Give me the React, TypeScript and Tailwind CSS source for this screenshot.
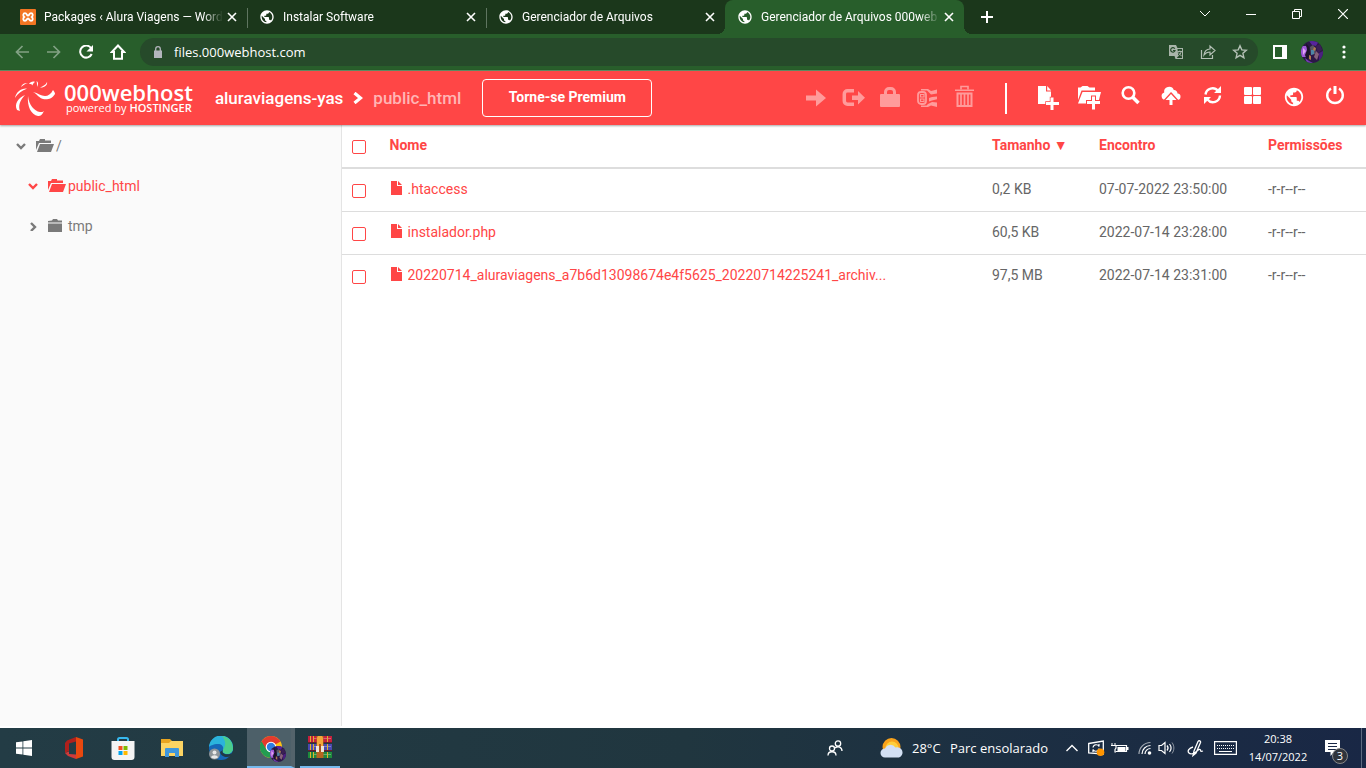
import type { ReactNode } from 'react';
import clsx from 'clsx';
import { MdPublic } from 'react-icons/md';

type GlyphProps = { w: number; h: number; className?: string; children: ReactNode };

function Glyph({ w, h, className, children }: GlyphProps) {
  return (
    <svg
      width={w}
      height={h}
      viewBox={`0 0 ${w} ${h}`}
      fill="currentColor"
      className={clsx('shrink-0', className)}
      aria-hidden="true"
    >
      {children}
    </svg>
  );
}

/* ---------- Browser ---------- */

const tabs = [
  { title: 'Packages ‹ Alura Viagens — Word', icon: 'xampp', active: false },
  { title: 'Instalar Software', icon: 'globe', active: false },
  { title: 'Gerenciador de Arquivos', icon: 'globe', active: false },
  { title: 'Gerenciador de Arquivos 000web', icon: 'globe', active: true },
];

function XamppIcon() {
  return (
    <Glyph w={16} h={16}>
      <rect width="16" height="16" rx="1" fill="#f37623" />
      <path
        d="M5 4.200c2 0 1.500 2.300 3 2.300s1-2.300 3-2.300 2.300 2.600.8 3.800c1.500 1.200 1.200 3.800-.8 3.800s-1.500-2.300-3-2.300-1 2.300-3 2.300-2.300-2.600-.8-3.800C2.700 6.800 3 4.200 5 4.200z"
        fill="none"
        stroke="#fff"
        strokeWidth="1.800"
      />
    </Glyph>
  );
}

function CloseIcon() {
  return (
    <Glyph w={10} h={10}>
      <path d="M1 1l8 8M9 1L1 9" stroke="currentColor" strokeWidth="1.600" fill="none" />
    </Glyph>
  );
}

function TabStrip() {
  return (
    <div className="flex h-[34px] bg-[#1b371b] pl-2 text-white">
      {tabs.map((tab, i) => (
        <div
          key={i}
          className={clsx(
            'relative flex w-[239px] min-w-0 items-center pl-3 pr-2.5',
            tab.active && 'rounded-t-lg bg-[#285e2b]'
          )}
        >
          {i > 0 && !tab.active && <span className="absolute left-0 top-2 h-5 w-px bg-[#5f7560]" />}
          {tab.active && (
            <>
              <span className="absolute -left-2 bottom-0 size-2 bg-[radial-gradient(circle_at_0_0,#1b371b_8px,#285e2b_8px)]" />
              <span className="absolute -right-2 bottom-0 size-2 bg-[radial-gradient(circle_at_100%_0,#1b371b_8px,#285e2b_8px)]" />
            </>
          )}
          {tab.icon === 'xampp' ? <XamppIcon /> : <MdPublic size={16} className="shrink-0" aria-hidden="true" />}
          <span className="ml-2 min-w-0 flex-1 overflow-hidden whitespace-nowrap font-[Roboto,sans-serif] text-[12px] leading-4 [mask-image:linear-gradient(to_right,#000_calc(100%-20px),transparent)]">
            {tab.title}
          </span>
          <button className="ml-1" aria-label="Fechar guia">
            <CloseIcon />
          </button>
        </div>
      ))}
      <button className="ml-4 self-center" aria-label="Nova guia">
        <Glyph w={14} h={12}>
          <path d="M6 0h2v5h5v2H8v5H6V7H1V5h5z" />
        </Glyph>
      </button>
      <div className="ml-auto flex h-7 items-center">
        <button className="flex w-[46px] justify-center" aria-label="Pesquisar guias">
          <Glyph w={12} h={8}>
            <path d="M1 1l5 5 5-5" fill="none" stroke="currentColor" />
          </Glyph>
        </button>
        <button className="flex w-[46px] justify-center" aria-label="Minimizar">
          <Glyph w={10} h={1}>
            <rect width="10" height="1" />
          </Glyph>
        </button>
        <button className="flex w-[46px] justify-center" aria-label="Restaurar">
          <Glyph w={10} h={10}>
            <path d="M.5 2.500h7v7h-7zM2.500 2.500v-2h7v7h-2" fill="none" stroke="currentColor" />
          </Glyph>
        </button>
        <button className="flex w-[46px] justify-center" aria-label="Fechar">
          <Glyph w={10} h={10}>
            <path d="M0 0l10 10M10 0L0 10" fill="none" stroke="currentColor" strokeWidth="1.200" />
          </Glyph>
        </button>
      </div>
    </div>
  );
}

function Avatar({ size }: { size: number }) {
  return (
    <svg width={size} height={size} viewBox="0 0 22 22" className="shrink-0 rounded-full" aria-hidden="true">
      <rect width="22" height="22" fill="#2c1748" />
      <path d="M0 5h5l3 5-3 6H0z" fill="#a05ad8" />
      <path d="M2 7l3 3-3 4z" fill="#e3a6f5" />
      <path d="M8 0h10l-3 5-4-1z" fill="#57249c" />
      <path d="M15 5l4-2 2 6-4 3z" fill="#3b1f55" />
      <path d="M5 2l3 4 1 7-3 6-2-5 2-5z" fill="#1c1428" />
      <path d="M9 6l3-2 3 4-1 5-4 1z" fill="#5b5560" />
      <path d="M10 9h3v4l-3 1z" fill="#4c86a8" />
      <path d="M13 6l2 1-1 3-2-1zM8 14l2 1v4l-2-1z" fill="#b07a4c" />
      <path d="M15 10l3 3-2 6-3-3z" fill="#86627a" />
      <path d="M18 12l4-2v7l-4 3z" fill="#4b1f80" />
      <path d="M4 17l4 3 4 2H6z" fill="#713bb0" />
    </svg>
  );
}

function AddressBar() {
  return (
    <div className="flex h-9 items-center bg-[#285e2b] text-white">
      <div className="flex w-[140px] items-center pl-1.5">
        <button className="flex w-8 justify-center text-[#82a184]" aria-label="Voltar">
          <Glyph w={14} h={14}>
            <path d="M14 7H1.500M7.500 1L1.500 7l6 6" fill="none" stroke="currentColor" strokeWidth="1.700" />
          </Glyph>
        </button>
        <button className="flex w-8 justify-center text-[#82a184]" aria-label="Avançar">
          <Glyph w={14} h={14}>
            <path d="M0 7h12.500M6.500 1l6 6-6 6" fill="none" stroke="currentColor" strokeWidth="1.700" />
          </Glyph>
        </button>
        <button className="flex w-8 justify-center" aria-label="Atualizar">
          <Glyph w={14} h={14}>
            <path d="M12 3A6 6 0 1 0 12.700 9" fill="none" stroke="currentColor" strokeWidth="2" />
            <path d="M14 0v6.500H7.500z" />
          </Glyph>
        </button>
        <button className="flex w-8 justify-center" aria-label="Página inicial">
          <Glyph w={16} h={16}>
            <path d="M8 1.500L1.800 8H4v6.800h8V8h2.200z" fill="none" stroke="currentColor" strokeWidth="2" />
          </Glyph>
        </button>
      </div>
      <div className="flex h-7 min-w-0 flex-1 items-center rounded-full bg-[#264a2a] pl-3.5 pr-2.5 text-[#b4c0b5]">
        <Glyph w={8} h={12} className="text-[#b3b5bd]">
          <path d="M0 4.500h8V12H0z" />
          <path d="M1.700 5V3a2.300 2.300 0 0 1 4.600 0v2" fill="none" stroke="currentColor" strokeWidth="1.300" />
        </Glyph>
        <input
          type="text"
          aria-label="Endereço"
          defaultValue="files.000webhost.com"
          className="ml-3 min-w-0 flex-1 bg-transparent text-[13px] leading-5 text-white outline-none"
        />
        <div className="flex gap-4">
          <button className="flex w-4 justify-center" aria-label="Traduzir">
            <Glyph w={16} h={16}>
              <path d="M1 1h7l1.500 3h5.500v11H7.500L6.500 12H1z" fill="#a9b5aa" />
              <path d="M9.500 5h4.500v9H8.800l1.500-2z" fill="#264a2a" />
              <path d="M9.500 7.500h4.500M11.800 6.500v1M13.200 7.700c-.5 2-1.500 3-3 4.200M10.600 8.500c.5 1.500 1.500 2.500 3 3.300" fill="none" stroke="#a9b5aa" />
              <path d="M6.800 4.800A2.200 2.200 0 1 0 7 6.500H5" fill="none" stroke="#264a2a" strokeWidth="1.200" />
            </Glyph>
          </button>
          <button className="flex w-4 justify-center" aria-label="Compartilhar">
            <Glyph w={16} h={16}>
              <path d="M1.500 6v8.500h11V11" fill="none" stroke="currentColor" strokeWidth="1.200" />
              <path
                d="M4 11c.5-4 2.500-5.800 6-6V2l5 4.500-5 4.500V8C7.500 8 5.500 9 4 11z"
                fill="none"
                stroke="currentColor"
                strokeWidth="1.200"
              />
            </Glyph>
          </button>
          <button className="flex w-4 justify-center" aria-label="Favoritos">
            <Glyph w={16} h={16}>
              <path
                d="M8 1.800l1.800 4.100 4.500.4-3.400 3 1 4.400L8 11.400l-3.900 2.300 1-4.400-3.400-3 4.500-.4z"
                fill="none"
                stroke="currentColor"
                strokeWidth="1.400"
              />
            </Glyph>
          </button>
        </div>
      </div>
      <div className="flex w-[108px] items-center pl-1.5">
        <button className="flex w-8 justify-center" aria-label="Painel lateral">
          <Glyph w={14} h={14}>
            <path d="M1 1h12v12H1z" fill="none" stroke="currentColor" strokeWidth="2" />
            <path d="M9 1h4v12H9z" />
          </Glyph>
        </button>
        <button className="flex w-8 justify-center" aria-label="Perfil">
          <Avatar size={22} />
        </button>
        <button className="flex w-8 justify-center" aria-label="Menu">
          <Glyph w={4} h={14}>
            <circle cx="2" cy="2" r="1.600" />
            <circle cx="2" cy="7" r="1.600" />
            <circle cx="2" cy="12" r="1.600" />
          </Glyph>
        </button>
      </div>
    </div>
  );
}

/* ---------- File manager header ---------- */

const selectionActions = [
  {
    label: 'Mover',
    icon: (
      <Glyph w={22} h={24}>
        <path d="M0 10.500h10V4.500l10 8.500-10 8.500v-6H0z" />
      </Glyph>
    ),
  },
  {
    label: 'Copiar para',
    icon: (
      <Glyph w={24} h={24}>
        <path d="M12 5.800H5.500A3.200 3.200 0 0 0 2.300 9v7a3.200 3.200 0 0 0 3.200 3.200H12" fill="none" stroke="currentColor" strokeWidth="3.500" />
        <path d="M10 10.500h6V6l7 6.800-7 6.700V15h-6z" />
      </Glyph>
    ),
  },
  {
    label: 'Permissões',
    icon: (
      <Glyph w={22} h={24}>
        <rect y="9" width="20" height="13" rx="1" />
        <path d="M5.500 10V7A3.500 3.500 0 0 1 9 3.500h2A3.500 3.500 0 0 1 14.500 7v3" fill="none" stroke="currentColor" strokeWidth="3" />
      </Glyph>
    ),
  },
  {
    label: 'Compactar',
    icon: (
      <Glyph w={22} h={24}>
        <rect x="1" y="7" width="8" height="12" rx="3" fill="none" stroke="currentColor" strokeWidth="1.800" />
        <path d="M3.500 9.500h3.500v2.500H3.500zM3.500 14h3.500v2.500H3.500z" fill="none" stroke="currentColor" strokeWidth="1.200" />
        <path d="M4 4h7l3 2 6-1.500v4l-6 1L11 6.500 10 5.500H4zM12 13l3-1 5-.5v2.800l-5 1.200-3 1zM4 22h7l3-1.500 6 1.500v-4.500l-5-.5-4 2-1.500 1.500H4z" />
      </Glyph>
    ),
  },
  {
    label: 'Excluir',
    icon: (
      <Glyph w={20} h={24}>
        <path d="M0 4.500h19V6H0z" />
        <path d="M6 4.500v-3h7v3" fill="none" stroke="currentColor" strokeWidth="1.600" />
        <path d="M2.500 8.500h14V21h-14z" fill="none" stroke="currentColor" strokeWidth="2" />
        <path d="M6 9v11M9.500 9v11M13 9v11" stroke="currentColor" strokeWidth="1.700" />
      </Glyph>
    ),
  },
];

/* the plus and arrow overlays keep a thin gap in the header's red */
const globalActions = [
  {
    label: 'Novo arquivo',
    icon: (
      <Glyph w={22} h={28}>
        <path d="M1 4h8v5.500h5V22H1z" />
        <path d="M10.200 4l4 4.500h-4z" />
        <path
          d="M13.500 15.500h3V20H22v3h-5.500v5h-3v-5H9v-3h4.500z"
          stroke="#ff4646"
          strokeWidth="1.400"
          paintOrder="stroke"
        />
      </Glyph>
    ),
  },
  {
    label: 'Nova pasta',
    icon: (
      <Glyph w={24} h={28}>
        <path d="M1 5.500h2.500l2-1.500h5l2 1.500H18V8.500H4.500L1 18z" />
        <path d="M5.500 10H24l-3 11.500H1z" />
        <path
          d="M15 14.500h3V19h5v3h-5v5.500h-3V22h-5v-3h5z"
          stroke="#ff4646"
          strokeWidth="2"
          paintOrder="stroke"
        />
      </Glyph>
    ),
  },
  {
    label: 'Buscar',
    icon: (
      <Glyph w={20} h={28}>
        <circle cx="8.500" cy="11" r="5.800" fill="none" stroke="currentColor" strokeWidth="2.600" />
        <path d="M12.500 15l6 6" stroke="currentColor" strokeWidth="3.500" />
      </Glyph>
    ),
  },
  {
    label: 'Enviar arquivos',
    icon: (
      <Glyph w={22} h={28}>
        <path d="M5.500 18a3.800 3.800 0 0 1-1.300-7.400A5 5 0 0 1 13.800 8 3.500 3.500 0 0 1 17.500 11.500 3.200 3.200 0 0 1 17 18z" />
        <path
          d="M11 12l5.500 6h-4v5h-3v-5h-4z"
          stroke="#ff4646"
          strokeWidth="2.800"
          paintOrder="stroke"
        />
      </Glyph>
    ),
  },
  {
    label: 'Atualizar',
    icon: (
      <Glyph w={20} h={28}>
        <path d="M3.500 12.500A7 7 0 0 1 16 9M18 13.500A7 7 0 0 1 5.500 17.500" fill="none" stroke="currentColor" strokeWidth="2.400" />
        <path d="M19 4v7h-7zM2 22v-7h7z" />
      </Glyph>
    ),
  },
  {
    label: 'Exibir em grade',
    icon: (
      <Glyph w={20} h={28}>
        <rect x="1" y="5" width="8" height="8" rx="1" />
        <rect x="10" y="5" width="8" height="8" rx="1" />
        <rect x="1" y="14" width="8" height="8" rx="1" />
        <rect x="10" y="14" width="8" height="8" rx="1" />
      </Glyph>
    ),
  },
  {
    label: 'Idioma',
    icon: <MdPublic size={22} className="mt-0.5 shrink-0" aria-hidden="true" />,
  },
  {
    label: 'Sair',
    icon: (
      <Glyph w={20} h={28}>
        <path d="M6 6.500a7.800 7.800 0 1 0 8 0" fill="none" stroke="currentColor" strokeWidth="2.400" />
        <path d="M8.500 4h3v8h-3z" />
      </Glyph>
    ),
  },
];

function Logo() {
  return (
    <a href="#" className="flex items-center gap-2 text-white">
      <Glyph w={42} h={38}>
        <path d="M19 13c5 1 8 4 12 4 3 0 6-2 8-6 1 1 2 3 2 4-3 5-8 6-12 5-4-1-6-5-10-7z" />
        <path d="M14 17c1 9 6 15 12 16 2 0 3 0 4-1-2 4-3 5-6 5-7-1-11-10-10-20z" />
        <path d="M11 16c-7 3-11 9-8 15l3 1c-2-5 0-11 5-16z" />
        <path d="M13 9.500C7 9 2 13 1 19c3-5 7-7 12-9.500z" />
        <path d="M7 8c1-3 4-4.500 7-4-3 .5-4 2-7 4zM15 5c1-2 4-3 6-2-1 .5-2.500 2-2.500 3.500C18 5 17 5 15 5zM22.500 2c2 1 2 3 .5 6 0-3 0-4-.5-6zM33 3c1 3-3 6-7 5.500C29 7 32 6 33 3z" />
      </Glyph>
      <span className="flex flex-col font-['Open_Sans',sans-serif]">
        <span className="text-[22px] font-semibold leading-5">000webhost</span>
        <span className="ml-0.5 text-[11px] leading-3">
          powered by <span className="font-semibold">HOSTINGER</span>
        </span>
      </span>
    </a>
  );
}

function AppHeader() {
  return (
    <header className="relative z-10 flex h-[55px] items-center border-t border-[#5f8a61] bg-[#ff4646] pl-3.5 pr-[11px] text-white shadow-[0_1px_2px_rgba(0,0,0,0.35)]">
      <Logo />
      <nav className="ml-[22px] flex items-center text-[17px] font-medium leading-6" aria-label="Caminho">
        <a href="#">aluraviagens-yas</a>
        <Glyph w={10} h={12} className="mx-2.5">
          <path d="M1.500 1l6 5-6 5" fill="none" stroke="currentColor" strokeWidth="3.200" />
        </Glyph>
        <a href="#" className="text-[#ffb5b5]">public_html</a>
      </nav>
      <button className="ml-[21px] h-[38px] w-[170px] rounded border border-white pb-0.5 text-sm font-bold">
        Torne-se Premium
      </button>
      <div className="ml-auto flex items-center">
        <div className="flex pb-0.5 text-[#ff9b9b]">
          {selectionActions.map((action) => (
            <button key={action.label} className="flex w-[37px] justify-center" aria-label={action.label} disabled>
              {action.icon}
            </button>
          ))}
        </div>
        <span className="ml-[22px] mr-5 h-[31px] w-0.5 bg-white" />
        <div className="flex items-center pb-1">
          {globalActions.map((action) => (
            <button key={action.label} className="flex w-[41px] justify-center" aria-label={action.label}>
              {action.icon}
            </button>
          ))}
        </div>
      </div>
    </header>
  );
}

/* ---------- Folder tree and file list ---------- */

function Chevron({ open }: { open: boolean }) {
  return open ? (
    <Glyph w={10} h={8}>
      <path d="M1 2l4 4 4-4" fill="none" stroke="currentColor" strokeWidth="2.400" />
    </Glyph>
  ) : (
    <Glyph w={10} h={10}>
      <path d="M3 2l4 4-4 4" fill="none" stroke="currentColor" strokeWidth="2.400" />
    </Glyph>
  );
}

function OpenFolder() {
  return (
    <Glyph w={18} h={14}>
      <path d="M0 2h3l1-2h5v1.500h6V4H3L0 11z" />
      <path d="M4 5h14l-3 8H1z" />
    </Glyph>
  );
}

function ClosedFolder() {
  return (
    <Glyph w={14} h={14}>
      <path d="M0 3.500V2l4-.5L5 0h4l1 1.500h4v2z" />
      <path d="M0 4.500h14V13H0z" />
    </Glyph>
  );
}

function FolderTree() {
  return (
    <aside className="mb-0.5 w-1/4 shrink-0 border-r border-[#e4e4e4] bg-[#fafafa] pt-px text-sm text-[#7a7a7a]">
      <ul>
        <li>
          <a href="#" className="flex h-10 items-center pl-4">
            <Chevron open />
            <span className="ml-2.5 flex items-center gap-0.5">
              <OpenFolder />/
            </span>
          </a>
        </li>
        <li>
          <a href="#" className="flex h-10 items-center pl-7 text-[#ff4646]">
            <Chevron open />
            <span className="ml-2.5 flex items-center gap-0.5">
              <OpenFolder />
              public_html
            </span>
          </a>
        </li>
        <li>
          <a href="#" className="flex h-10 items-center pl-7">
            <Chevron open={false} />
            <span className="ml-2.5 flex items-center gap-1.5">
              <ClosedFolder />
              tmp
            </span>
          </a>
        </li>
      </ul>
    </aside>
  );
}

const files = [
  { name: '.htaccess', size: '0,2 KB', date: '07-07-2022 23:50:00', perms: '-r-r--r--' },
  { name: 'instalador.php', size: '60,5 KB', date: '2022-07-14 23:28:00', perms: '-r-r--r--' },
  {
    name: '20220714_aluraviagens_a7b6d13098674e4f5625_20220714225241_archiv...',
    size: '97,5 MB',
    date: '2022-07-14 23:31:00',
    perms: '-r-r--r--',
  },
];

function Check({ label }: { label: string }) {
  return (
    <input
      type="checkbox"
      aria-label={label}
      className="mt-0.5 block size-3.5 appearance-none rounded-xs border border-[#ff4646] checked:bg-[#ff4646]"
    />
  );
}

function FileList() {
  return (
    <div className="min-w-0 flex-1">
      <table className="w-full table-fixed border-collapse text-left text-sm text-[#666]">
        <thead>
          <tr className="h-[43px] border-b-2 border-[#ddd] text-[#ff4646]">
            <th className="w-[38px] pl-2.5">
              <Check label="Selecionar tudo" />
            </th>
            <th className="px-2.5 pb-0.5 font-bold">Nome</th>
            <th className="w-[107px] px-2.5 pb-0.5 font-bold">Tamanho ▼</th>
            <th className="w-[169px] px-2.5 pb-0.5 font-bold">Encontro</th>
            <th className="w-[108px] px-2.5 pb-0.5 font-bold">Permissões</th>
          </tr>
        </thead>
        <tbody>
          {files.map((file) => (
            <tr key={file.name} className="h-[43px] border-b border-[#ddd] last:border-0">
              <td className="pl-2.5">
                <Check label={file.name} />
              </td>
              <td className="px-2.5 pb-0.5">
                <a href="#" className="flex items-center gap-1.5 text-[#ff4646]">
                  <Glyph w={12} h={16} className="mb-0.5">
                    <path d="M1 1h6v5h5v9H1z" />
                    <path d="M8 1l4 4H8z" />
                  </Glyph>
                  <span className="truncate">{file.name}</span>
                </a>
              </td>
              <td className="px-2.5 pb-0.5">{file.size}</td>
              <td className="px-2.5 pb-0.5">{file.date}</td>
              <td className="px-2.5 pb-0.5">{file.perms}</td>
            </tr>
          ))}
        </tbody>
      </table>
    </div>
  );
}

/* ---------- Taskbar ---------- */

function WindowsIcon() {
  return (
    <Glyph w={16} h={16} className="text-white">
      <path d="M0 2.300l6.500-.9v6.200H0zM7.300 1.300L16 0v7.600H7.300zM0 8.400h6.500v6.200L0 13.700zM7.300 8.400H16V16l-8.700-1.200z" />
    </Glyph>
  );
}

function OfficeIcon() {
  return (
    <Glyph w={18} h={22}>
      <path d="M11 0L2 3.500 0 6v10l4-2V6.500l7-2z" fill="#b0201c" />
      <path d="M11 0l7 2.500v17L11 22V4.500z" fill="#e8480f" />
      <path d="M0 16l4-1.500v2.500l7 .5V22l-8-3z" fill="#ce3a3a" />
    </Glyph>
  );
}

function StoreIcon() {
  return (
    <Glyph w={24} h={24}>
      <path d="M7 6V3.500A1.500 1.500 0 0 1 8.500 2h7A1.500 1.500 0 0 1 17 3.500V6" fill="none" stroke="#37b8ee" strokeWidth="2" />
      <path d="M.5 5h23v16a3 3 0 0 1-3 3h-17a3 3 0 0 1-3-3z" fill="#f4f4f4" />
      <path d="M7.500 10h4v4h-4z" fill="#f25022" />
      <path d="M12.500 10h4v4h-4z" fill="#7fba00" />
      <path d="M7.500 15h4v4h-4z" fill="#00a4ef" />
      <path d="M12.500 15h4v4h-4z" fill="#ffb900" />
    </Glyph>
  );
}

function ExplorerIcon() {
  return (
    <Glyph w={22} h={20}>
      <path d="M0 1h9l2 2h11v15H0z" fill="#e9a520" />
      <path d="M0 5h8l2-2h12v15H0z" fill="#fcd463" />
      <path d="M4 19v-8a1 1 0 0 1 1-1h12a1 1 0 0 1 1 1v8h-4v-4H8v4z" fill="#3f97dc" />
    </Glyph>
  );
}

function EdgeIcon() {
  return (
    <Glyph w={24} h={24}>
      <circle cx="12" cy="12" r="12" fill="#1667b7" />
      <path d="M0 11A12 12 0 0 1 24 12c0 4-3 6-6 6-3-.5-5-1.500-4-4 1-3-1-6-5-6-5 0-8 2-9 3z" fill="#2bb3dc" />
      <path d="M13 0a12 12 0 0 1 11 12c0 4-3 6-6 6-3-.5-5-1.500-4-4 2-4 4-8-1-14z" fill="#4bcd8c" />
      <path d="M14 14c-2 3 2 5 7 4l2-1-1 3c-4 2-10 1-11-4z" fill="#213944" />
      <circle cx="5.500" cy="18" r="5.500" fill="#8d9499" />
      <circle cx="5.500" cy="16.500" r="2" fill="#e8e8e8" />
      <path d="M2 21.500c.5-3 6.500-3 7 0-2 1.500-5 1.500-7 0z" fill="#e8e8e8" />
    </Glyph>
  );
}

function ChromeIcon() {
  return (
    <span className="relative">
      <Glyph w={22} h={22}>
        <circle cx="11" cy="11" r="11" fill="#fbc116" />
        <path d="M11 11L1.500 5.500A11 11 0 0 1 20.500 5.500z" fill="#e33b2e" />
        <path d="M1.500 5.500A11 11 0 0 0 11 22l5-9-9 0z" fill="#239c51" />
        <path d="M1.500 5.500L6.200 14 11 5.500z" fill="#e33b2e" />
        <path d="M1.500 5.500A11 11 0 0 0 1.500 16.500L6.500 14z" fill="#239c51" />
        <circle cx="11" cy="11" r="5.300" fill="#fff" />
        <circle cx="11" cy="11" r="4.200" fill="#2f7de1" />
      </Glyph>
      <span className="absolute -bottom-1 -right-1">
        <Avatar size={16} />
      </span>
    </span>
  );
}

function WinrarIcon() {
  return (
    <Glyph w={24} h={22}>
      <path d="M0 0h24v6H0z" fill="#c5203c" />
      <path d="M0 8h24v6H0z" fill="#4a49b0" />
      <path d="M0 16h24v6H0z" fill="#1e8a3c" />
      <path d="M0 6h24v1H0zM0 14h24v1H0z" fill="#6b1d2c" />
      <path d="M5 2h18v1H5zM5 10h18v1H5zM5 18h18v1H5z" fill="#fff" opacity=".3" />
      <path d="M2 0h1v6H2zM2 8h1v6H2zM2 16h1v6H2zM5 0h1v6H5zM5 8h1v6H5zM5 16h1v6H5zM19 0h1v6h-1zM19 8h1v6h-1zM19 16h1v6h-1z" fill="#e0b02c" />
      <path d="M8.500 0h7v22h-7z" fill="#b5651f" />
      <path d="M9 2.500A3 3 0 0 1 15 2.500V10H9z" fill="#f3a83a" />
      <path d="M8 10h8v6H8z" fill="#eee5d8" />
      <path d="M11 8h2v8h-2z" fill="#a8501f" />
    </Glyph>
  );
}

function Taskbar() {
  return (
    <footer className="flex h-10 items-center bg-linear-to-r from-[#233c45] via-[#20363f] to-[#192745] font-['Open_Sans','Noto_Sans',sans-serif] text-white">
      <button className="flex w-12 justify-center" aria-label="Iniciar"><WindowsIcon /></button>
      <button className="ml-0.5 flex w-12 justify-center" aria-label="Office"><OfficeIcon /></button>
      <button className="flex w-[50px] justify-center" aria-label="Microsoft Store"><StoreIcon /></button>
      <button className="flex w-12 justify-center" aria-label="Explorador de Arquivos"><ExplorerIcon /></button>
      <button className="flex w-[50px] justify-center" aria-label="Edge"><EdgeIcon /></button>
      <button
        className="ml-px flex h-10 w-12 items-center border-b-2 border-r-4 border-b-[#76b9ed] border-r-[#53636b] bg-[#4d6069] pl-[13px]"
        aria-label="Chrome"
      >
        <ChromeIcon />
      </button>
      <button className="ml-[5px] flex h-10 w-10 items-center justify-center border-b-2 border-[#76b9ed]" aria-label="WinRAR">
        <WinrarIcon />
      </button>

      <div className="ml-auto flex items-center">
        <button aria-label="Pessoas">
          <Glyph w={16} h={16}>
            <g fill="none" stroke="currentColor" strokeWidth="1.300">
              <circle cx="5" cy="8.500" r="2.500" />
              <path d="M1 15.500c0-5 8-5 8 0" />
              <circle cx="11" cy="3.500" r="2.700" />
              <path d="M8 8c3-2.500 7-1 7 3" />
            </g>
          </Glyph>
        </button>
        <button className="ml-[37px] flex items-center text-[13px] leading-5">
          <Glyph w={24} h={20}>
            <circle cx="11.500" cy="9" r="9" fill="#f9a31b" />
            <circle cx="12" cy="10" r="6.500" fill="#ffcf3a" />
            <path d="M5 19.500a4.500 4.500 0 0 1 0-9 6 6 0 0 1 10.500-1A5 5 0 0 1 19 19.500z" fill="#d3e0f4" />
          </Glyph>
          <span className="ml-2 w-[38px] whitespace-nowrap text-left">28°C</span>
          <span className="w-[100px] whitespace-nowrap text-left">Parc ensolarado</span>
        </button>
        <button className="ml-4" aria-label="Mostrar ícones ocultos">
          <Glyph w={12} h={8}>
            <path d="M.5 7L6 1.500 11.500 7" fill="none" stroke="currentColor" strokeWidth="1.400" />
          </Glyph>
        </button>
        <button className="ml-2.5" aria-label="Windows Update">
          <Glyph w={17} h={16}>
            <path d="M.7 3.500L15.300 1v13L.7 13z" fill="none" stroke="currentColor" strokeWidth="1.300" />
            <path d="M5 7.500C5.500 4 10 4 11 6.500V4M11 8.500c-.5 3.500-5 3.500-6 1V12" fill="none" stroke="currentColor" strokeWidth="1.200" />
            <circle cx="12.500" cy="12.200" r="3.800" fill="#ff9500" />
          </Glyph>
        </button>
        <button className="ml-1.5" aria-label="Bateria">
          <Glyph w={18} h={12}>
            <path d="M1 1v3M4 1v3" stroke="currentColor" />
            <path d="M0 3.500h5V6L4 7.500V10h1M5.500 3.500h10v6H5" fill="none" stroke="currentColor" strokeWidth="1.200" />
            <path d="M6.500 5h8v4h-8zM16 5h1.500v3H16z" />
          </Glyph>
        </button>
        <button className="ml-[9px]" aria-label="Rede">
          <Glyph w={14} h={14}>
            <g fill="none" stroke="currentColor" strokeWidth="1.200">
              <path d="M1 13A11.500 11.500 0 0 1 12.500 1.500" opacity=".6" />
              <path d="M4 13a8.500 8.500 0 0 1 8.500-8.500M7 13a5.500 5.500 0 0 1 5.500-5.500" />
            </g>
            <circle cx="11.500" cy="12" r="1.800" />
          </Glyph>
        </button>
        <button className="ml-1.5" aria-label="Volume">
          <Glyph w={17} h={14}>
            <path d="M1 4.500h2.500L7 1.500v11L3.500 9.500H1z" fill="none" stroke="currentColor" strokeWidth="1.200" />
            <path d="M9 4.500c1.300 1.500 1.300 3.500 0 5M11.500 3c2 2.500 2 5.500 0 8" fill="none" stroke="currentColor" strokeWidth="1.200" />
            <path d="M14 1.500c2.500 3.500 2.500 7.500 0 11" fill="none" stroke="currentColor" opacity=".5" />
          </Glyph>
        </button>
        <button className="ml-3" aria-label="Windows Ink">
          <Glyph w={17} h={18}>
            <path
              d="M7 12L11 2.500c1-1.500 3-.5 2.500 1L9 14l-3 2.500zM6 8C2 9 0 12 2 14s6 0 8-2 3-2 3.500-1-.5 2 2.500 1"
              fill="none"
              stroke="currentColor"
              strokeWidth="1.300"
            />
          </Glyph>
        </button>
        <button className="ml-2.5" aria-label="Teclado virtual">
          <Glyph w={23} h={14}>
            <path d="M.6.600h21.800v12.800H.6z" fill="none" stroke="currentColor" strokeWidth="1.200" />
            <path d="M3 4.500h17M3 7.500h17" stroke="currentColor" strokeDasharray="1 1" />
            <path d="M5 10.500h13" stroke="currentColor" />
          </Glyph>
        </button>
        <button className="ml-2.5 w-[62px] whitespace-nowrap text-center text-[11px] leading-[18px]">
          20:38
          <br />
          14/07/2022
        </button>
        <button className="relative ml-[15px] mr-[11px]" aria-label="3 notificações">
          <Glyph w={26} h={24}>
            <path d="M1 4h15v12h-6l-3.500 4v-4H1z" />
            <path d="M4 7.500h9M4 10.500h9M4 13.500h9" stroke="#192745" />
          </Glyph>
          <span className="absolute -bottom-1 right-0.5 flex size-4 items-center justify-center rounded-full border border-[#888] bg-[#30343c] text-[11px] leading-4">
            3
          </span>
        </button>
        <span className="mr-1 h-10 w-px bg-[#5d6a80]" />
      </div>
    </footer>
  );
}

export default function App() {
  return (
    <div className="flex min-h-screen flex-col bg-white font-[Roboto,sans-serif]">
      <div className="font-['Open_Sans','Noto_Sans',sans-serif]">
        <TabStrip />
        <AddressBar />
      </div>
      <AppHeader />
      <main className="flex flex-1">
        <FolderTree />
        <FileList />
      </main>
      <Taskbar />
    </div>
  );
}
